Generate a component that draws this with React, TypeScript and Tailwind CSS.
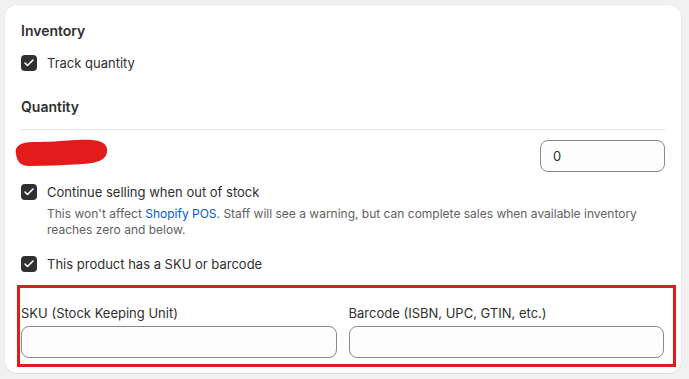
import { Check } from "lucide-react";

function Box({ label, help }: { label: string; help?: React.ReactNode }) {
  return (
    <label className="flex items-start gap-[10px]">
      <span className="mt-[2px] flex h-4 w-4 shrink-0 items-center justify-center rounded-[4px] bg-[#303030]">
        <Check className="h-3 w-3 text-white" strokeWidth={3.2} />
      </span>
      <span className="flex flex-col">
        <span className="text-[13px] leading-5 text-[#303030]">{label}</span>
        {help && <span className="mt-[4px] text-[12px] leading-4 text-[#616161]">{help}</span>}
      </span>
    </label>
  );
}

function Field({ label }: { label: string }) {
  return (
    <div className="flex flex-col gap-[3px]">
      <span className="text-[13px] leading-5 text-[#303030]">{label}</span>
      <input className="h-8 w-full rounded-lg border border-[#8a8a8a] bg-[#fdfdfd] px-3 text-[13px] outline-none" />
    </div>
  );
}

export default function App() {
  return (
    <main className="min-h-[379px] bg-[#f1f1f1] pl-[5px] pt-[5px] font-['Inter','Liberation_Sans',sans-serif]">
      <div className="relative w-[676px] rounded-xl bg-white px-4 pb-[15px] pt-4 shadow-[0_1px_0_0_#dcdcdc,0_0_0_1px_#ebebeb]">
        <h2 className="text-[14px] font-semibold leading-5 text-[#303030]">Inventory</h2>
        <div className="mt-3">
          <Box label="Track quantity" />
        </div>
        <h3 className="mt-6 text-[14px] font-semibold leading-5 text-[#303030]">Quantity</h3>
        <div className="mt-3 border-t border-[#e3e3e3]" />
        <div className="mt-[10px] flex items-center justify-between">
          <svg width="96" height="28" viewBox="0 0 96 28" className="-ml-[8px] -mt-[6px]">
            <path d="M3 15 C1 7 8 3 20 3 C36 3 48 2 64 1 C80 0 93 1 94 10 C95 20 86 24 70 25 C52 26 34 27 16 27 C7 27 4 22 3 15 Z" fill="#e31b1b" />
          </svg>
          <input defaultValue="0" className="h-8 w-[125px] rounded-lg border border-[#8a8a8a] bg-[#fdfdfd] px-3 text-[13px] text-[#303030] outline-none" />
        </div>
        <div className="mt-[10px]">
          <Box
            label="Continue selling when out of stock"
            help={
              <>
                This won't affect <span className="text-[#005bd3]">Shopify POS</span>. Staff will see a warning, but can complete sales when available inventory reaches zero and below.
              </>
            }
          />
        </div>
        <div className="mt-[16px]">
          <Box label="This product has a SKU or barcode" />
        </div>
        <div className="mt-[29px] grid grid-cols-2 gap-3 pr-px">
          <Field label="SKU (Stock Keeping Unit)" />
          <Field label="Barcode (ISBN, UPC, GTIN, etc.)" />
        </div>
        <div className="pointer-events-none absolute bottom-[6px] left-[12px] right-[5px] h-[82px] border-[3px] border-[#e31b1b]" />
      </div>
    </main>
  );
}
